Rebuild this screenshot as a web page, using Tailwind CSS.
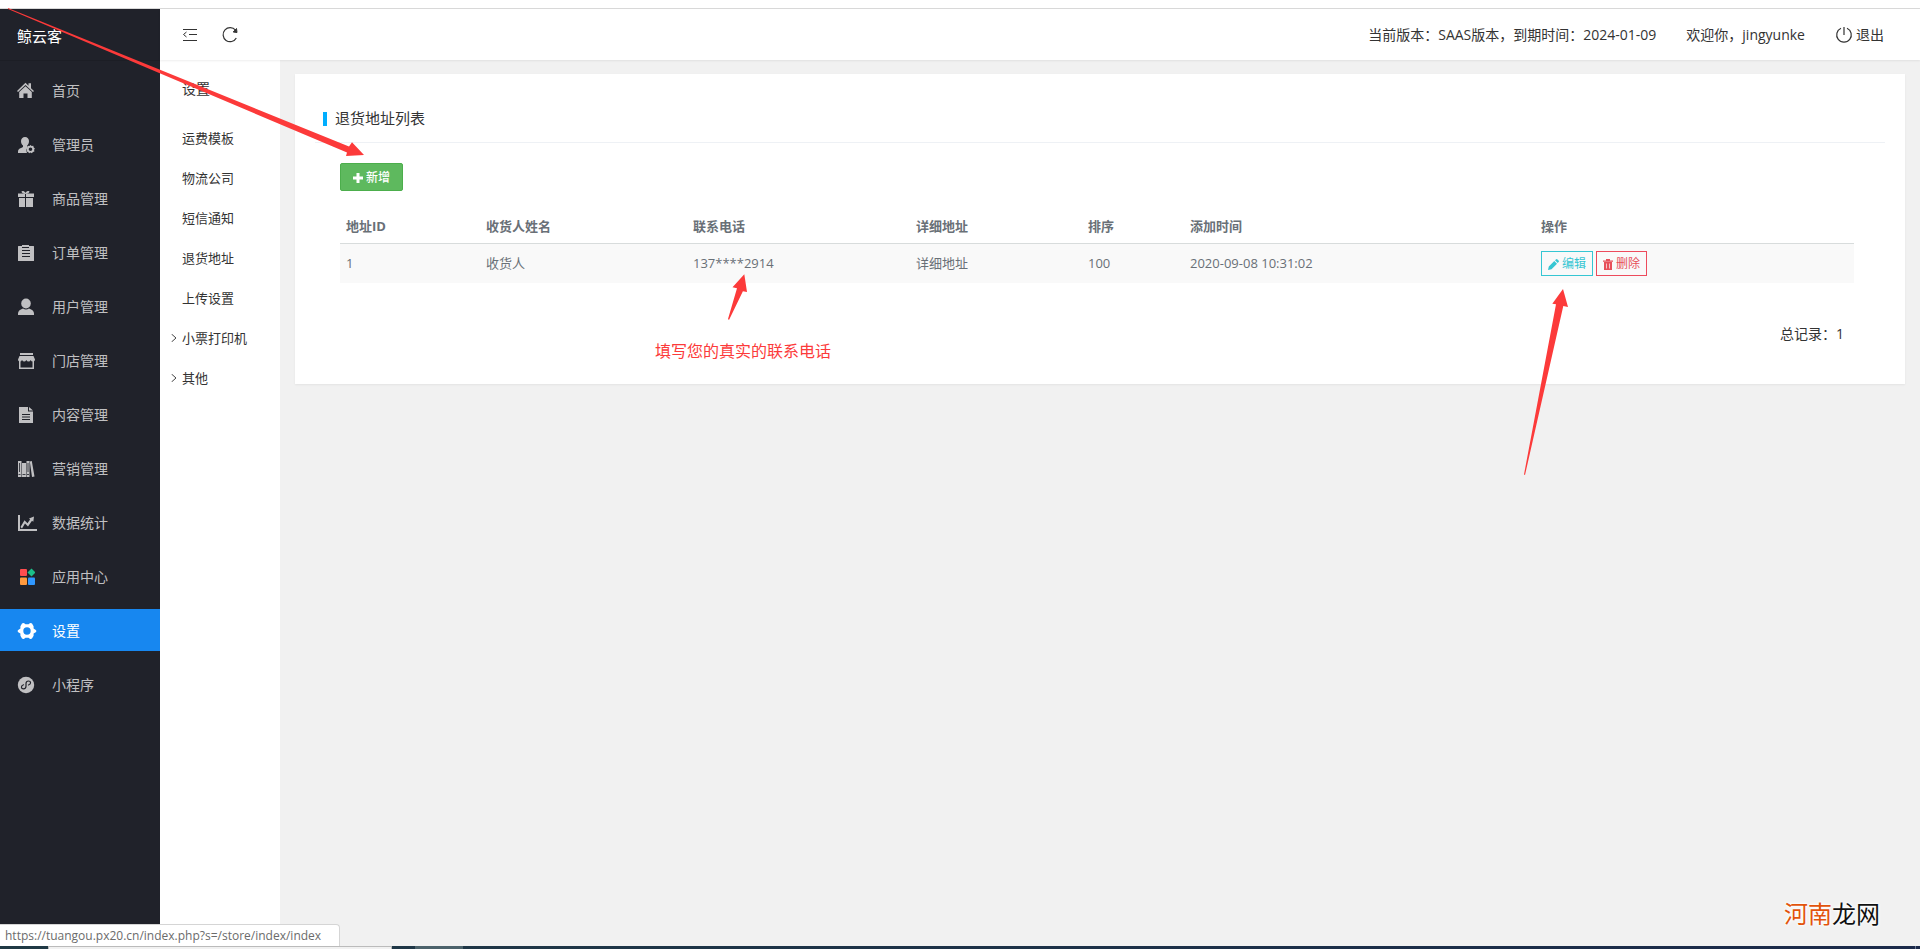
<!DOCTYPE html>
<html lang="zh-CN">
<head>
<meta charset="utf-8">
<meta name="viewport" content="width=device-width, initial-scale=1">
<title>退货地址列表</title>
<script src="https://cdn.jsdelivr.net/npm/@tailwindcss/browser@4"></script>
</head>
<body class="relative flex h-screen flex-col overflow-hidden bg-[#f1f1f1] font-['Open_Sans','Noto_Sans_CJK_SC',sans-serif] text-sm text-[#333]">
<div class="h-[9px] shrink-0 border-b border-[#d9d9d9] bg-white"></div>

<div class="flex min-h-0 flex-1">
  <nav class="w-40 shrink-0 bg-[#20222a] text-[#c0c0c2]">
    <h1 class="flex h-[52px] items-center border-b border-[#1c1e25] pt-1 pl-[17px] text-[15px] text-white">鲸云客</h1>
    <ul class="flex flex-col gap-3 pt-2">
      <li><a href="#" class="flex h-[42px] items-center gap-[17px] pt-0.5 pl-[17px]">
        <svg class="size-[18px] shrink-0" viewBox="0 0 18 18" fill="currentColor"><path d="M0 9 8.500 .8l3 3V1.200h2.500V6.200l3 2.800-1 .9L8.500 2.900 1 9.900z"/><path d="M2.200 10 8.500 4.200l6.300 5.800v6H10.500v-4.500h-4V16H2.200z"/></svg>首页</a></li>
      <li><a href="#" class="flex h-[42px] items-center gap-[17px] pt-0.5 pl-[17px]">
        <svg class="size-[18px] shrink-0" viewBox="0 0 18 18" fill="currentColor"><path d="M8 1C5.600 1 4 2.700 4 5c0 2 .8 3.600 2 4.600v1.200C5.500 12 1 12.300 1 15.500V17h9a5 5 0 0 1 1-6c-.8-.3-1-.6-1-1.200 1.300-1 2-2.700 2-4.700C12 2.700 10.400 1 8 1z"/><path fill-rule="evenodd" d="m13.500 9 1.200 1 1.600-.2.400 1.600 1.200 1-.8 1.400.3 1.600-1.500.6-1 1.200-1.400-.7-1.400.7-1-1.200-1.500-.6.300-1.600-.8-1.400 1.200-1 .4-1.600 1.600.2zm0 2.500a1.800 1.800 0 1 0 0 3.600 1.800 1.800 0 0 0 0-3.600z"/></svg>管理员</a></li>
      <li><a href="#" class="flex h-[42px] items-center gap-[17px] pt-0.5 pl-[17px]">
        <svg class="size-[18px] shrink-0" viewBox="0 0 18 18" fill="currentColor"><path d="M1 3.500h7V7H1zM9 3.500h8V7H9zM2 8h6v9H2zM9 8h7v9H9z"/><path d="M8.500 4C7 4 4.500 3 4.500 1.800 4.500.5 7.500.8 8.500 3c1-2.200 4-2.500 4-1.200C12.500 3 10 4 8.500 4z"/></svg>商品管理</a></li>
      <li><a href="#" class="flex h-[42px] items-center gap-[17px] pt-0.5 pl-[17px]">
        <svg class="size-[18px] shrink-0" viewBox="0 0 18 18"><path fill="currentColor" d="M1 2.500Q1 2 1.500 2H5V1h7v1h4.500q.5 0 .5.500v14q0 .5-.5.500h-15q-.5 0-.5-.5z"/><path stroke="#20222a" d="M5 3.500h7M5 6.500h8M5 9.500h8M5 12.500h8"/></svg>订单管理</a></li>
      <li><a href="#" class="flex h-[42px] items-center gap-[17px] pt-0.5 pl-[17px]">
        <svg class="size-[18px] shrink-0" viewBox="0 0 18 18" fill="currentColor"><ellipse cx="9" cy="5.500" rx="4.800" ry="5"/><path d="M6 10.500Q9 12.500 12 10.500q5 1.500 5 5V17H1v-1.500q0-3.500 5-5z"/></svg>用户管理</a></li>
      <li><a href="#" class="flex h-[42px] items-center gap-[17px] pt-0.5 pl-[17px]">
        <svg class="size-[18px] shrink-0" viewBox="0 0 18 18" fill="currentColor"><path d="M3 1h13v2H3zM2.500 4h14L18 7.500q0 2-2 2t-2.200-1.500Q13 9.500 11.500 9.500T9.300 8Q8.500 9.500 7.200 9.500T5 8Q4.300 9.500 2.800 9.500 1 9.500 1 7.500z"/><path d="M2 9h1.500v6.500h12V9H17v8H2z"/></svg>门店管理</a></li>
      <li><a href="#" class="flex h-[42px] items-center gap-[17px] pt-0.5 pl-[17px]">
        <svg class="size-[18px] shrink-0" viewBox="0 0 18 18"><path fill="currentColor" d="M2 1h9v4.500h5V17H2zM12 1l4 3.500h-4z"/><path stroke="#20222a" d="M5 8.500h8M5 11h8M5 13.500h8"/></svg>内容管理</a></li>
      <li><a href="#" class="flex h-[42px] items-center gap-[17px] pt-0.5 pl-[17px]">
        <svg class="size-[18px] shrink-0" viewBox="0 0 18 18"><path fill="currentColor" d="M1 1h3.500v16H1zM5 3h4v14H5zM9.500 1h3v16h-3zM12.800 1.500l2-.5L17.500 16.500l-2.500.5z"/><path stroke="#20222a" stroke-width=".8" d="M1.500 14.500h2M5.500 14.500h3M10 14.500h2M2.500 3v9M11 3v9"/></svg>营销管理</a></li>
      <li><a href="#" class="flex h-[42px] items-center gap-[15px] pt-0.5 pl-[17px]">
        <svg class="h-[18px] w-5 shrink-0" viewBox="0 0 20 18" fill="currentColor"><path d="M1 1h2v14h17v2H1z"/><path d="m3.500 13 4-6.700 3 3 2.600-3.700-1.100-1L17 2.500l-.7 5.300-1.300-1-4 5.700-3-3L5 14.500z"/></svg>数据统计</a></li>
      <li><a href="#" class="flex h-[42px] items-center gap-[17px] pt-0.5 pl-[17px]">
        <svg class="size-[18px] shrink-0" viewBox="0 0 18 18"><rect x="3" y="1" width="7" height="7" rx="1" fill="#ff4d4f"/><path d="m14.500.6 4 4-4 4-4-4z" fill="#1bbf89"/><rect x="3" y="9.500" width="7" height="7.500" rx="1" fill="#ff9a3e"/><rect x="11" y="9.500" width="7" height="7.500" rx="1" fill="#2f97ff"/></svg>应用中心</a></li>
      <li><a href="#" aria-current="page" class="flex h-[42px] items-center gap-[15px] bg-[#1787f0] pt-0.5 pl-[17px] text-white">
        <svg class="h-[18px] w-5 shrink-0" viewBox="0 0 20 18"><path fill="currentColor" fill-rule="evenodd" d="M5 1.500Q6 .8 7.200 1.300L8.500 2.300H11.500L12.800 1.300Q14 .8 15 1.500L16.600 4.300V6.500Q19.500 8 19.500 9T16.600 11.500V13.700L15 16.500Q14 17.200 12.800 16.700L11.500 15.700H8.500L7.200 16.700Q6 17.200 5 16.500L3.400 13.700V11.500Q.5 10 .5 9T3.400 6.500V4.300zM10 5.300a3.700 3.700 0 1 0 0 7.400 3.700 3.700 0 0 0 0-7.400z"/></svg>设置</a></li>
      <li><a href="#" class="flex h-[42px] items-center gap-[17px] pt-0.5 pl-[17px]">
        <svg class="size-[18px] shrink-0" viewBox="0 0 18 18"><circle cx="9" cy="9" r="8.200" fill="currentColor"/><path fill="none" stroke="#20222a" stroke-width="1.200" stroke-linecap="round" d="M6.500 8.800c-3 1-2.500 4 0 4 1.600 0 2.500-1 2.500-2.500V7.500C9 6 10 5 11.500 5c2.500 0 3 3 0 4"/></svg>小程序</a></li>
    </ul>
  </nav>

  <div class="flex min-w-0 flex-1 flex-col">
    <header class="z-10 flex h-[51px] shrink-0 items-center bg-white pr-9 pl-[22px] shadow-[0_1px_2px_rgba(0,0,0,0.07)]">
      <button type="button" aria-label="收起菜单" class="mr-6"><svg class="size-4" viewBox="0 0 16 16" fill="none" stroke="#333"><path d="M1 2.500h14M7 7.500h8M1 13.500h14M4.500 5l-3 2.500 3 2.500"/></svg></button>
      <button type="button" aria-label="刷新"><svg class="size-4" viewBox="0 0 16 16" fill="none" stroke="#333"><path stroke-width="1.200" d="M13.500 3.200A7 7 0 1 0 14.300 11"/><path fill="#333" d="m14.500 1.500.5 4-3.800-.5z"/></svg></button>
      <div class="ml-auto flex items-center gap-[30px] whitespace-nowrap">
        <span>当前版本：SAAS版本，到期时间：2024-01-09</span>
        <span>欢迎你，jingyunke</span>
        <a href="#" class="flex items-center gap-[3px]"><svg class="size-[18px]" viewBox="0 0 18 18" fill="none" stroke="#333"><path stroke-width="1.200" d="M9 1v8M6 2.200a7.300 7.300 0 1 0 6 0"/></svg>退出</a>
      </div>
    </header>

    <div class="flex min-h-0 flex-1">
      <aside class="w-[120px] shrink-0 bg-white pt-2 text-[13px]">
        <h2 class="flex h-[42px] items-center pl-[22px] text-sm">设置</h2>
        <ul class="pt-2">
          <li><a href="#" class="flex h-10 items-center pl-[22px]">运费模板</a></li>
          <li><a href="#" class="flex h-10 items-center pl-[22px]">物流公司</a></li>
          <li><a href="#" class="flex h-10 items-center pl-[22px]">短信通知</a></li>
          <li><a href="#" class="flex h-10 items-center pl-[22px]">退货地址</a></li>
          <li><a href="#" class="flex h-10 items-center pl-[22px]">上传设置</a></li>
          <li><a href="#" class="flex h-10 items-center gap-1 pl-[10px]"><svg class="size-2" viewBox="0 0 8 8" fill="none" stroke="#444"><path d="m1.500 0 4.500 4-4.500 4"/></svg>小票打印机</a></li>
          <li><a href="#" class="flex h-10 items-center gap-1 pl-[10px]"><svg class="size-2" viewBox="0 0 8 8" fill="none" stroke="#444"><path d="m1.500 0 4.500 4-4.500 4"/></svg>其他</a></li>
        </ul>
      </aside>

      <main class="min-w-0 flex-1 px-[15px] pt-[14px]">
        <section class="bg-white px-5 pt-5 pb-10 shadow-[0_1px_2px_rgba(0,0,0,0.06)]">
          <h2 class="flex h-[49px] items-center gap-2 border-b border-[#eef1f5] pt-3 pb-2.5 pl-2 text-[15px] before:h-[14px] before:w-1 before:bg-[#00aeff]">退货地址列表</h2>
          <div class="pt-5 pr-[31px] pl-[25px]">
            <button type="button" class="flex h-7 w-[63px] items-center justify-center gap-[3px] rounded-xs border border-[#4cae4c] bg-[#5eb95e] pt-0.5 text-xs font-medium text-white"><svg class="size-[10px]" viewBox="0 0 10 10"><path stroke="#fff" stroke-width="3" d="M5 0v10M0 5h10"/></svg>新增</button>
            <table class="mt-[19px] w-full table-fixed border-collapse text-left text-[13px] text-[#697077]">
              <colgroup><col class="w-[9.250%]"><col class="w-[13.670%]"><col class="w-[14.730%]"><col class="w-[11.360%]"><col class="w-[6.740%]"><col class="w-[23.180%]"><col></colgroup>
              <thead><tr class="h-[33px] border-b border-[#d8dcdc]"><th class="px-1.5 font-bold">地址ID</th><th class="px-1.5 font-bold">收货人姓名</th><th class="px-1.5 font-bold">联系电话</th><th class="px-1.5 font-bold">详细地址</th><th class="px-1.5 font-bold">排序</th><th class="px-1.5 font-bold">添加时间</th><th class="px-1.5 font-bold">操作</th></tr></thead>
              <tbody><tr class="h-10 bg-[#f9f9f9]"><td class="px-1.5">1</td><td class="px-1.5">收货人</td><td class="px-1.5">137****2914</td><td class="px-1.5">详细地址</td><td class="px-1.5">100</td><td class="px-1.5">2020-09-08 10:31:02</td>
                <td class="px-1.5"><div class="flex gap-[3px] text-xs">
                  <a href="#" class="flex h-[25px] w-[52px] items-center justify-center gap-[3px] border border-[#36c6d3] pt-0.5 text-[#36c6d3]"><svg class="size-[11px]" viewBox="0 0 11 11" fill="currentColor"><path d="M0 11l.8-3.500L6.300 2l2.700 2.700-5.500 5.500zM7 1.300 8.200.2q.5-.4 1 0l1.600 1.600q.4.500 0 1L9.700 4z"/></svg>编辑</a>
                  <button type="button" class="flex h-[25px] w-[51px] items-center justify-center gap-[3px] border border-[#ed4b5c] pt-0.5 text-[#e7505a]"><svg class="h-[11px] w-[10px]" viewBox="0 0 10 11"><path fill="currentColor" d="M3 0h4v1.500h3v1.300H0V1.500h3zM1 3h8v8H1z"/><path stroke="#f9f9f9" stroke-width=".7" d="M3.500 4.500v5M6.500 4.500v5"/></svg>删除</button>
                </div></td></tr></tbody>
            </table>
            <p class="pt-[41px] pr-[10px] text-right leading-5">总记录：1</p>
          </div>
        </section>
      </main>
    </div>
  </div>
</div>

<div class="flex h-[3px] shrink-0 bg-gradient-to-r from-[#203a45] to-[#1b2a4a]">
  <span class="ml-12 w-[344px] border-x border-t border-[#bbb] bg-[#f1f1f1]"></span>
  <span class="ml-[23px] w-12 bg-[#4c626b]"></span>
  <span class="mr-1 ml-auto w-px bg-[#6b7a92]"></span>
</div>

<!-- Browser status bubble -->
<div class="absolute bottom-[3px] left-0 flex h-[22px] min-w-[340px] items-center rounded-tr border-t border-r border-[#d5d5d5] bg-white pr-2 pl-[5px] text-xs whitespace-nowrap text-[#6b6b6b]">https://tuangou.px20.cn/index.php?s=/store/index/index</div>

<!-- Annotations drawn over the page -->
<svg class="pointer-events-none absolute top-0 left-0 z-20 h-[949px] w-[1920px]" viewBox="0 0 1920 949" fill="#fc3a3a" aria-hidden="true">
  <path d="M8 8 349 146.500 352 142.300 364 155 346 156 347 152.500 8 9z"/>
  <path d="M744.300 274.300 747 292 742.900 291.300 729 320 728 319 737 288.300 732.500 287.300z"/>
  <path d="M1563 289 1568 307 1563.300 306 1525 475 1524 474.500 1556 304.300 1552.300 303.700z"/>
</svg>
<p class="absolute top-[339px] left-[655px] z-20 text-base leading-6 text-[#fc3a3a]">填写您的真实的联系电话</p>
<p class="absolute right-10 bottom-[19px] text-2xl leading-8 text-[#111] [text-shadow:0_0_2px_#fff,0_0_3px_#fff,0_0_4px_#fff]"><span class="text-[#e2540c]">河南</span>龙网</p>
</body>
</html>
